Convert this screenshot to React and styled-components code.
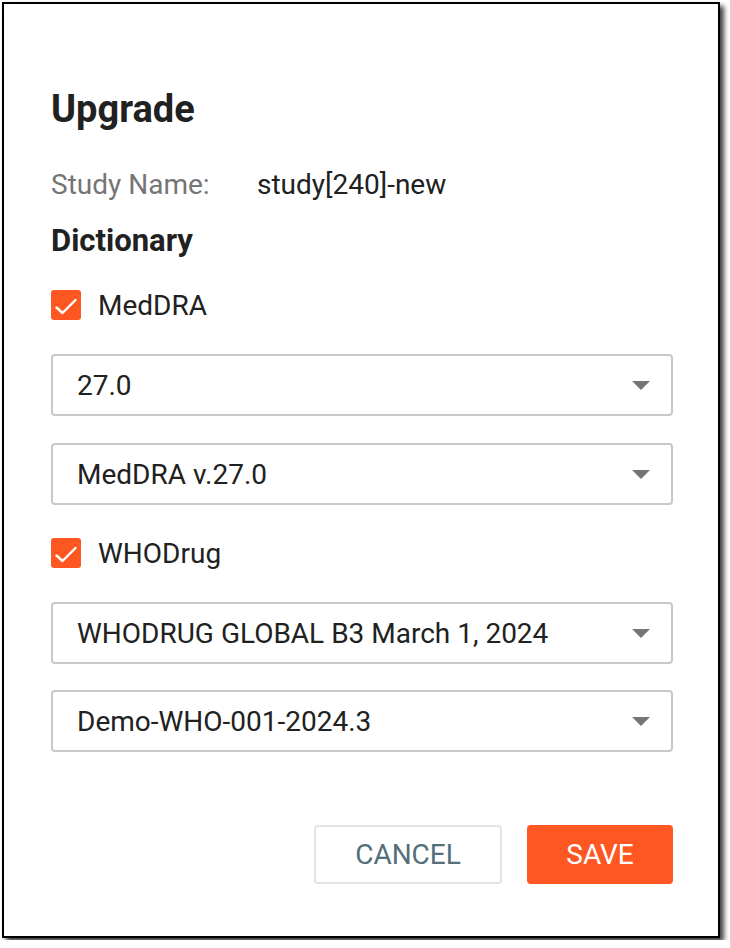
import styled, { createGlobalStyle } from "styled-components";

const GlobalStyle = createGlobalStyle`
  html, body {
    margin: 0;
    padding: 0;
    background: #ffffff;
  }
  body {
    font-family: Roboto, "Liberation Sans", Arial, sans-serif;
    color: #212121;
  }
`;

const Page = styled.div`
  padding: 2px;
  width: 730px;
  box-sizing: border-box;
`;

const Dialog = styled.div`
  box-sizing: border-box;
  width: 718px;
  height: 936px;
  background: #ffffff;
  border: 2px solid #000000;
  box-shadow: 4px 4px 5px rgba(0, 0, 0, 0.75);
  padding: 85px 45px 0 47px;
  display: flex;
  flex-direction: column;
`;

const Title = styled.h1`
  margin: 0;
  font-size: 38px;
  line-height: 40px;
  font-weight: 700;
  color: #212121;
`;

const InfoRow = styled.div`
  display: flex;
  align-items: center;
  height: 36px;
  margin-top: 37px;
  font-size: 28px;
`;

const InfoLabel = styled.span`
  width: 206px;
  color: #757575;
`;

const InfoValue = styled.span`
  color: #212121;
`;

const SectionTitle = styled.h2`
  margin: 21px 0 0;
  font-size: 31px;
  line-height: 36px;
  font-weight: 700;
`;

const CheckRow = styled.label`
  display: flex;
  align-items: center;
  gap: 17px;
  height: 36px;
  margin-top: ${(p) => p.$top}px;
  font-size: 28px;
`;

const CheckBox = styled.span`
  width: 30px;
  height: 30px;
  border-radius: 3px;
  background: #ff5722;
  display: flex;
  align-items: center;
  justify-content: center;
`;

const Select = styled.div`
  box-sizing: border-box;
  height: 62px;
  margin-top: ${(p) => p.$top}px;
  border: 2px solid #c8c8c8;
  border-radius: 4px;
  display: flex;
  align-items: center;
  justify-content: space-between;
  padding: 0 21px 0 24px;
  font-size: 28px;
  color: #212121;
`;

const Arrow = styled.span`
  width: 0;
  height: 0;
  border-left: 9px solid transparent;
  border-right: 9px solid transparent;
  border-top: 9px solid #757575;
`;

const Actions = styled.div`
  display: flex;
  justify-content: flex-end;
  align-items: center;
  gap: 25px;
  margin-top: 73px;
`;

const Button = styled.button`
  box-sizing: border-box;
  height: 59px;
  border-radius: 4px;
  font-family: Roboto, "Liberation Sans", Arial, sans-serif;
  font-size: 28px;
  font-weight: 400;
  letter-spacing: 0;
  cursor: pointer;
  border: 2px solid ${(p) => (p.$primary ? "#ff5722" : "#e3e3e3")};
  background: ${(p) => (p.$primary ? "#ff5722" : "#ffffff")};
  color: ${(p) => (p.$primary ? "#ffffff" : "#546e7a")};
  width: ${(p) => p.$width}px;
`;

function Check() {
  return (
    <CheckBox>
      <svg width="30" height="30" viewBox="0 0 30 30">
        <path
          d="M5.5 17.5l6 5.5L24.5 10"
          fill="none"
          stroke="#ffffff"
          strokeWidth="2.4"
          strokeLinecap="round"
          strokeLinejoin="round"
        />
      </svg>
    </CheckBox>
  );
}

const DICTIONARIES = [
  {
    name: "MedDRA",
    top: 28,
    selects: [
      { value: "27.0", top: 31 },
      { value: "MedDRA v.27.0", top: 27 },
    ],
  },
  {
    name: "WHODrug",
    top: 30,
    selects: [
      { value: "WHODRUG GLOBAL B3 March 1, 2024", top: 31 },
      { value: "Demo-WHO-001-2024.3", top: 26 },
    ],
  },
];

export default function App() {
  return (
    <Page>
      <GlobalStyle />
      <Dialog>
        <Title>Upgrade</Title>
        <InfoRow>
          <InfoLabel>Study Name:</InfoLabel>
          <InfoValue>study[240]-new</InfoValue>
        </InfoRow>
        <SectionTitle>Dictionary</SectionTitle>
        {DICTIONARIES.map((dict) => (
          <div key={dict.name}>
            <CheckRow $top={dict.top}>
              <Check />
              {dict.name}
            </CheckRow>
            {dict.selects.map((s) => (
              <Select key={s.value} $top={s.top}>
                <span>{s.value}</span>
                <Arrow />
              </Select>
            ))}
          </div>
        ))}
        <Actions>
          <Button $width={188}>CANCEL</Button>
          <Button $primary $width={146}>
            SAVE
          </Button>
        </Actions>
      </Dialog>
    </Page>
  );
}
